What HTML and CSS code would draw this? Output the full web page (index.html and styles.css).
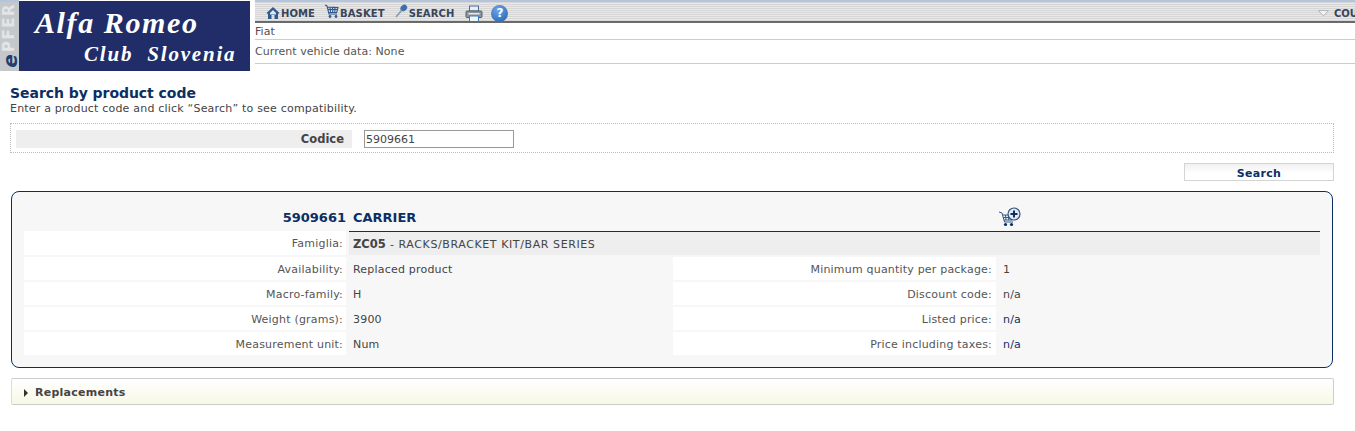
FILE: index.html
```html
<!DOCTYPE html>
<html lang="en">
<head>
<meta charset="utf-8">
<title>Search by product code</title>
<link rel="stylesheet" href="styles.css">
</head>
<body>
<header class="top">
  <div class="brand">
    <div class="epfer"><span class="pfer">PFER</span><span class="e">e</span></div>
    <div class="logo">
      <div class="logo-1">Alfa Romeo</div>
      <div class="logo-2">Club&nbsp; Slovenia</div>
    </div>
  </div>
  <div class="topmain">
    <nav class="nav">
      <a class="nav-item"><svg width="14" height="14" viewBox="0 0 14 14"><path d="M7 1 L0.5 7 L2 8 L2 13 L5.5 13 L5.5 9 L8.5 9 L8.5 13 L12 13 L12 8 L13.5 7 Z" fill="#2f5a8f"/><path d="M4 7 L7 4 L10 7 L10 8.5 L4 8.5Z" fill="#dfe8f2"/></svg>HOME</a>
      <a class="nav-item nav-basket"><svg width="15" height="15" viewBox="0 0 15 15"><path d="M1 1 L3 2 L5 10 L13 10 M3.5 3 L14 3.5 L12.7 8.5 L4.6 8.5 M6 3 L6.6 8.5 M8.5 3 L8.8 8.5 M11 3.2 L10.8 8.5 M4 5.5 L13.5 5.5" fill="none" stroke="#2f5a8f" stroke-width="1.1"/><circle cx="6" cy="12.5" r="1.4" fill="#2f5a8f"/><circle cx="12" cy="12.5" r="1.4" fill="#2f5a8f"/></svg>BASKET</a>
      <a class="nav-item nav-search"><svg width="13" height="14" viewBox="0 0 13 14"><ellipse cx="8.8" cy="4" rx="3.6" ry="3" fill="#3f6fa8" transform="rotate(-40 8.8 4)"/><path d="M6.5 6.5 L1 13" stroke="#8a9db5" stroke-width="1.8"/></svg>SEARCH</a>
      <span class="nav-icon nav-print"><svg width="18" height="17" viewBox="0 0 18 17"><rect x="4.5" y="1" width="9" height="5" fill="#e8eef5" stroke="#4d6b8a"/><rect x="1" y="6" width="16" height="6.5" rx="1" fill="#8e979f" stroke="#555f69"/><rect x="3.5" y="8" width="11" height="1.5" fill="#e6e6e6"/><rect x="4.5" y="11" width="9" height="5.5" fill="#f3f6f9" stroke="#3e7ab8"/></svg></span>
      <span class="nav-icon help">?</span>
      <span class="nav-right"><svg class="tri" width="11" height="7" viewBox="0 0 11 7"><path d="M0.5 0.5 L10.5 0.5 L5.5 6 Z" fill="#f2f2f2" stroke="#b5b5b5"/></svg><b>COUNTRY</b></span>
    </nav>
    <div class="info info-brand">Fiat</div>
    <div class="info info-vehicle">Current vehicle data: None</div>
  </div>
</header>

<main class="page">
  <h1 class="title">Search by product code</h1>
  <p class="intro">Enter a product code and click “Search” to see compatibility.</p>

  <form class="form">
    <label class="form-label" for="code">Codice</label>
    <input class="form-input" id="code" type="text" value="5909661">
  </form>
  <div class="actions"><button class="btn" type="button">Search</button></div>

  <section class="card">
    <div class="head">
      <div class="head-code">5909661</div>
      <div class="head-name">CARRIER</div>
      <div class="head-add"><svg width="24" height="20" viewBox="0 0 24 20"><path d="M1 5 L4 6 L6.5 15 L15 15 M4.5 8 L15 8 L14 13 L6 13 M7.5 8 L8 13 M10.5 8 L10.7 13 M5 10.5 L14.5 10.5" fill="none" stroke="#2f5a8f" stroke-width="1"/><circle cx="7.5" cy="17.5" r="1.6" fill="#0b2f63"/><circle cx="13.5" cy="17.5" r="1.6" fill="#0b2f63"/><circle cx="16" cy="7" r="6" fill="#e6ebf2" stroke="#33557f" stroke-width="1.2"/><path d="M12.5 7 H19.5 M16 3.5 V10.5" stroke="#0b2f63" stroke-width="2"/></svg></div>
    </div>
    <div class="fam">
      <div class="k">Famiglia:</div>
      <div class="fam-v"><b>ZC05</b> - RACKS/BRACKET KIT/BAR SERIES</div>
    </div>
    <div class="grid">
      <div class="k">Availability:</div><div class="v">Replaced product</div>
      <div class="k">Minimum quantity per package:</div><div class="v">1</div>
      <div class="k">Macro-family:</div><div class="v">H</div>
      <div class="k">Discount code:</div><div class="v">n/a</div>
      <div class="k">Weight (grams):</div><div class="v">3900</div>
      <div class="k">Listed price:</div><div class="v price">n/a</div>
      <div class="k">Measurement unit:</div><div class="v">Num</div>
      <div class="k">Price including taxes:</div><div class="v price">n/a</div>
    </div>
  </section>

  <section class="acc">
    <span class="acc-arrow"></span><span class="acc-title">Replacements</span>
  </section>
</main>
</body>
</html>
```
FILE: styles.css
```css
* { box-sizing: border-box; }
html, body { margin: 0; padding: 0; background: #fff; overflow: hidden; height: 431px; }
body { font-family: "DejaVu Sans", Verdana, sans-serif; font-size: 10px; color: #444; }

.top { display: flex; height: 71px; }
.brand { display: flex; width: 250px; flex: none; }
.epfer { width: 19px; flex: none; background: #c4c8cb; border-top: 2px solid #b4c4dc; display: flex; flex-direction: column; align-items: center; }
.pfer { writing-mode: vertical-rl; transform: rotate(180deg); font-size: 15px; line-height: 15px; font-weight: bold; color: #e2e5e7; letter-spacing: 1.5px; margin-top: 4px; height: 46px; }
.e { font-size: 20px; line-height: 18px; font-weight: bold; font-style: italic; color: #1f3f6d; transform: rotate(-90deg); }
.logo { flex: 1; background: #212d69; margin-top: 1px; padding-top: 7px; color: #fff; font-family: "Liberation Serif", serif; font-style: italic; font-weight: bold; }
.logo-1 { font-size: 30px; line-height: 30px; padding-left: 16px; letter-spacing: 1.6px; }
.logo-2 { font-size: 21px; line-height: 24px; padding-left: 65px; margin-top: 4px; letter-spacing: 1.8px; }

.topmain { flex: 1; margin-left: 5px; min-width: 0; }
.nav { height: 23px; display: flex; align-items: center; padding: 3px 0 0 11px; border-top: 2px solid #b4c4dc; border-bottom: 2px solid #6a6a6a; background: repeating-linear-gradient(#d6d6d6 0, #d6d6d6 1px, #e8e8e8 1px, #e8e8e8 2px); overflow: hidden; }
.nav-item { display: flex; align-items: center; gap: 1px; font-weight: bold; font-size: 10px; letter-spacing: .1px; color: #36455a; margin-right: 10px; white-space: nowrap; }
.nav-basket { margin-right: 10px; margin-left: -1px; }
.nav-search { margin-right: 11px; }
.nav-basket svg, .nav-search svg { margin-top: -4px; }
.nav-icon { display: flex; margin-right: 9px; }
.nav-print { margin-right: 8px; }
.help { width: 17px; height: 17px; border-radius: 50%; background: radial-gradient(circle at 40% 30%, #6fa5e6, #1c5cb0); color: #fff; font-weight: bold; font-size: 12px; align-items: center; justify-content: center; }
.nav-right { margin-left: auto; display: flex; align-items: center; gap: 5px; font-size: 10px; color: #36455a; width: 37px; flex: none; white-space: nowrap; }
.tri { flex: none; }
.info { font-size: 11px; letter-spacing: .05px; color: #555; }
.info-brand { height: 17px; line-height: 17px; border-bottom: 1px solid #ccc; color: #5a4a55; }
.info-vehicle { height: 24px; line-height: 23px; border-bottom: 1px solid #ccc; }

.page { padding: 14px 21px 0 10px; }
.title { margin: 0; font-size: 14px; line-height: 16px; font-weight: bold; letter-spacing: -.05px; color: #0b2f63; }
.intro { margin: 1px 0 0; font-size: 11px; line-height: 14px; letter-spacing: .2px; color: #444; }

.form { margin-top: 7px; height: 30px; border: 1px dotted #bbb; padding: 6px 5px; display: flex; }
.form-label { width: 336px; height: 18px; background: #eee; text-align: right; padding-right: 8px; font-size: 11.5px; font-weight: bold; line-height: 18px; color: #444; }
.form-input { width: 150px; height: 18px; margin-left: 12px; border: 1px solid #999; padding: 0 1px; font: 11px "DejaVu Sans", Verdana, sans-serif; color: #444; border-radius: 0; outline: none; }

.actions { display: flex; justify-content: flex-end; margin-top: 10px; }
.btn { width: 150px; height: 18px; padding: 2px 0 0; border: 1px solid #d4d4d4; background: linear-gradient(#f1f1f1, #fff 60%); font: bold 11px "DejaVu Sans", Verdana, sans-serif; letter-spacing: .3px; color: #0b2f63; }

.card { margin: 10px 1px 0 1px; height: 177px; border: 1px solid #0b2f63; border-radius: 8px; background: #f7f7f7; padding: 13px 12px 0; }
.head { display: flex; height: 26px; align-items: center; padding-bottom: 2px; }
.head-code { width: 322px; text-align: right; font-size: 13px; font-weight: bold; color: #0b2f63; }
.head-name { width: 316px; margin-left: 7px; font-size: 13px; font-weight: bold; color: #0b2f63; }
.head-add { margin-left: 329px; display: flex; margin-top: -1px; }

.fam { display: flex; gap: 3px; height: 24px; }
.k { background: #fff; text-align: right; padding-right: 3px; font-size: 11px; letter-spacing: .2px; color: #555; }
.fam .k { width: 322px; line-height: 25px; }
.fam-v { flex: 1; background: #eee; border-top: 1px solid #0b2f63; padding-left: 4px; line-height: 24px; font-size: 11px; letter-spacing: .6px; color: #444; }
.fam-v b { font-size: 11.5px; letter-spacing: 0; }

.grid { margin-top: 2px; display: grid; grid-template-columns: 322px 327px 323px 1fr; grid-auto-rows: 23px; row-gap: 2px; }
.grid .k { line-height: 25px; }
.grid .k:nth-child(4n+3) { padding-right: 4px; }
.v { padding-left: 7px; line-height: 25px; font-size: 11px; letter-spacing: .2px; color: #444; }
.price { color: #0b2f63; }

.acc { margin: 10px 0 0 1px; height: 27px; border: 1px solid #ccc; border-left-color: #ddd; border-radius: 2px; background: linear-gradient(#fff, #f7f8e6); display: flex; align-items: center; padding: 2px 0 0 12px; }
.acc-arrow { width: 0; height: 0; border-left: 4px solid #333; border-top: 4px solid transparent; border-bottom: 4px solid transparent; margin-right: 7px; }
.acc-title { font-size: 11px; font-weight: bold; letter-spacing: .25px; color: #444; }
```
